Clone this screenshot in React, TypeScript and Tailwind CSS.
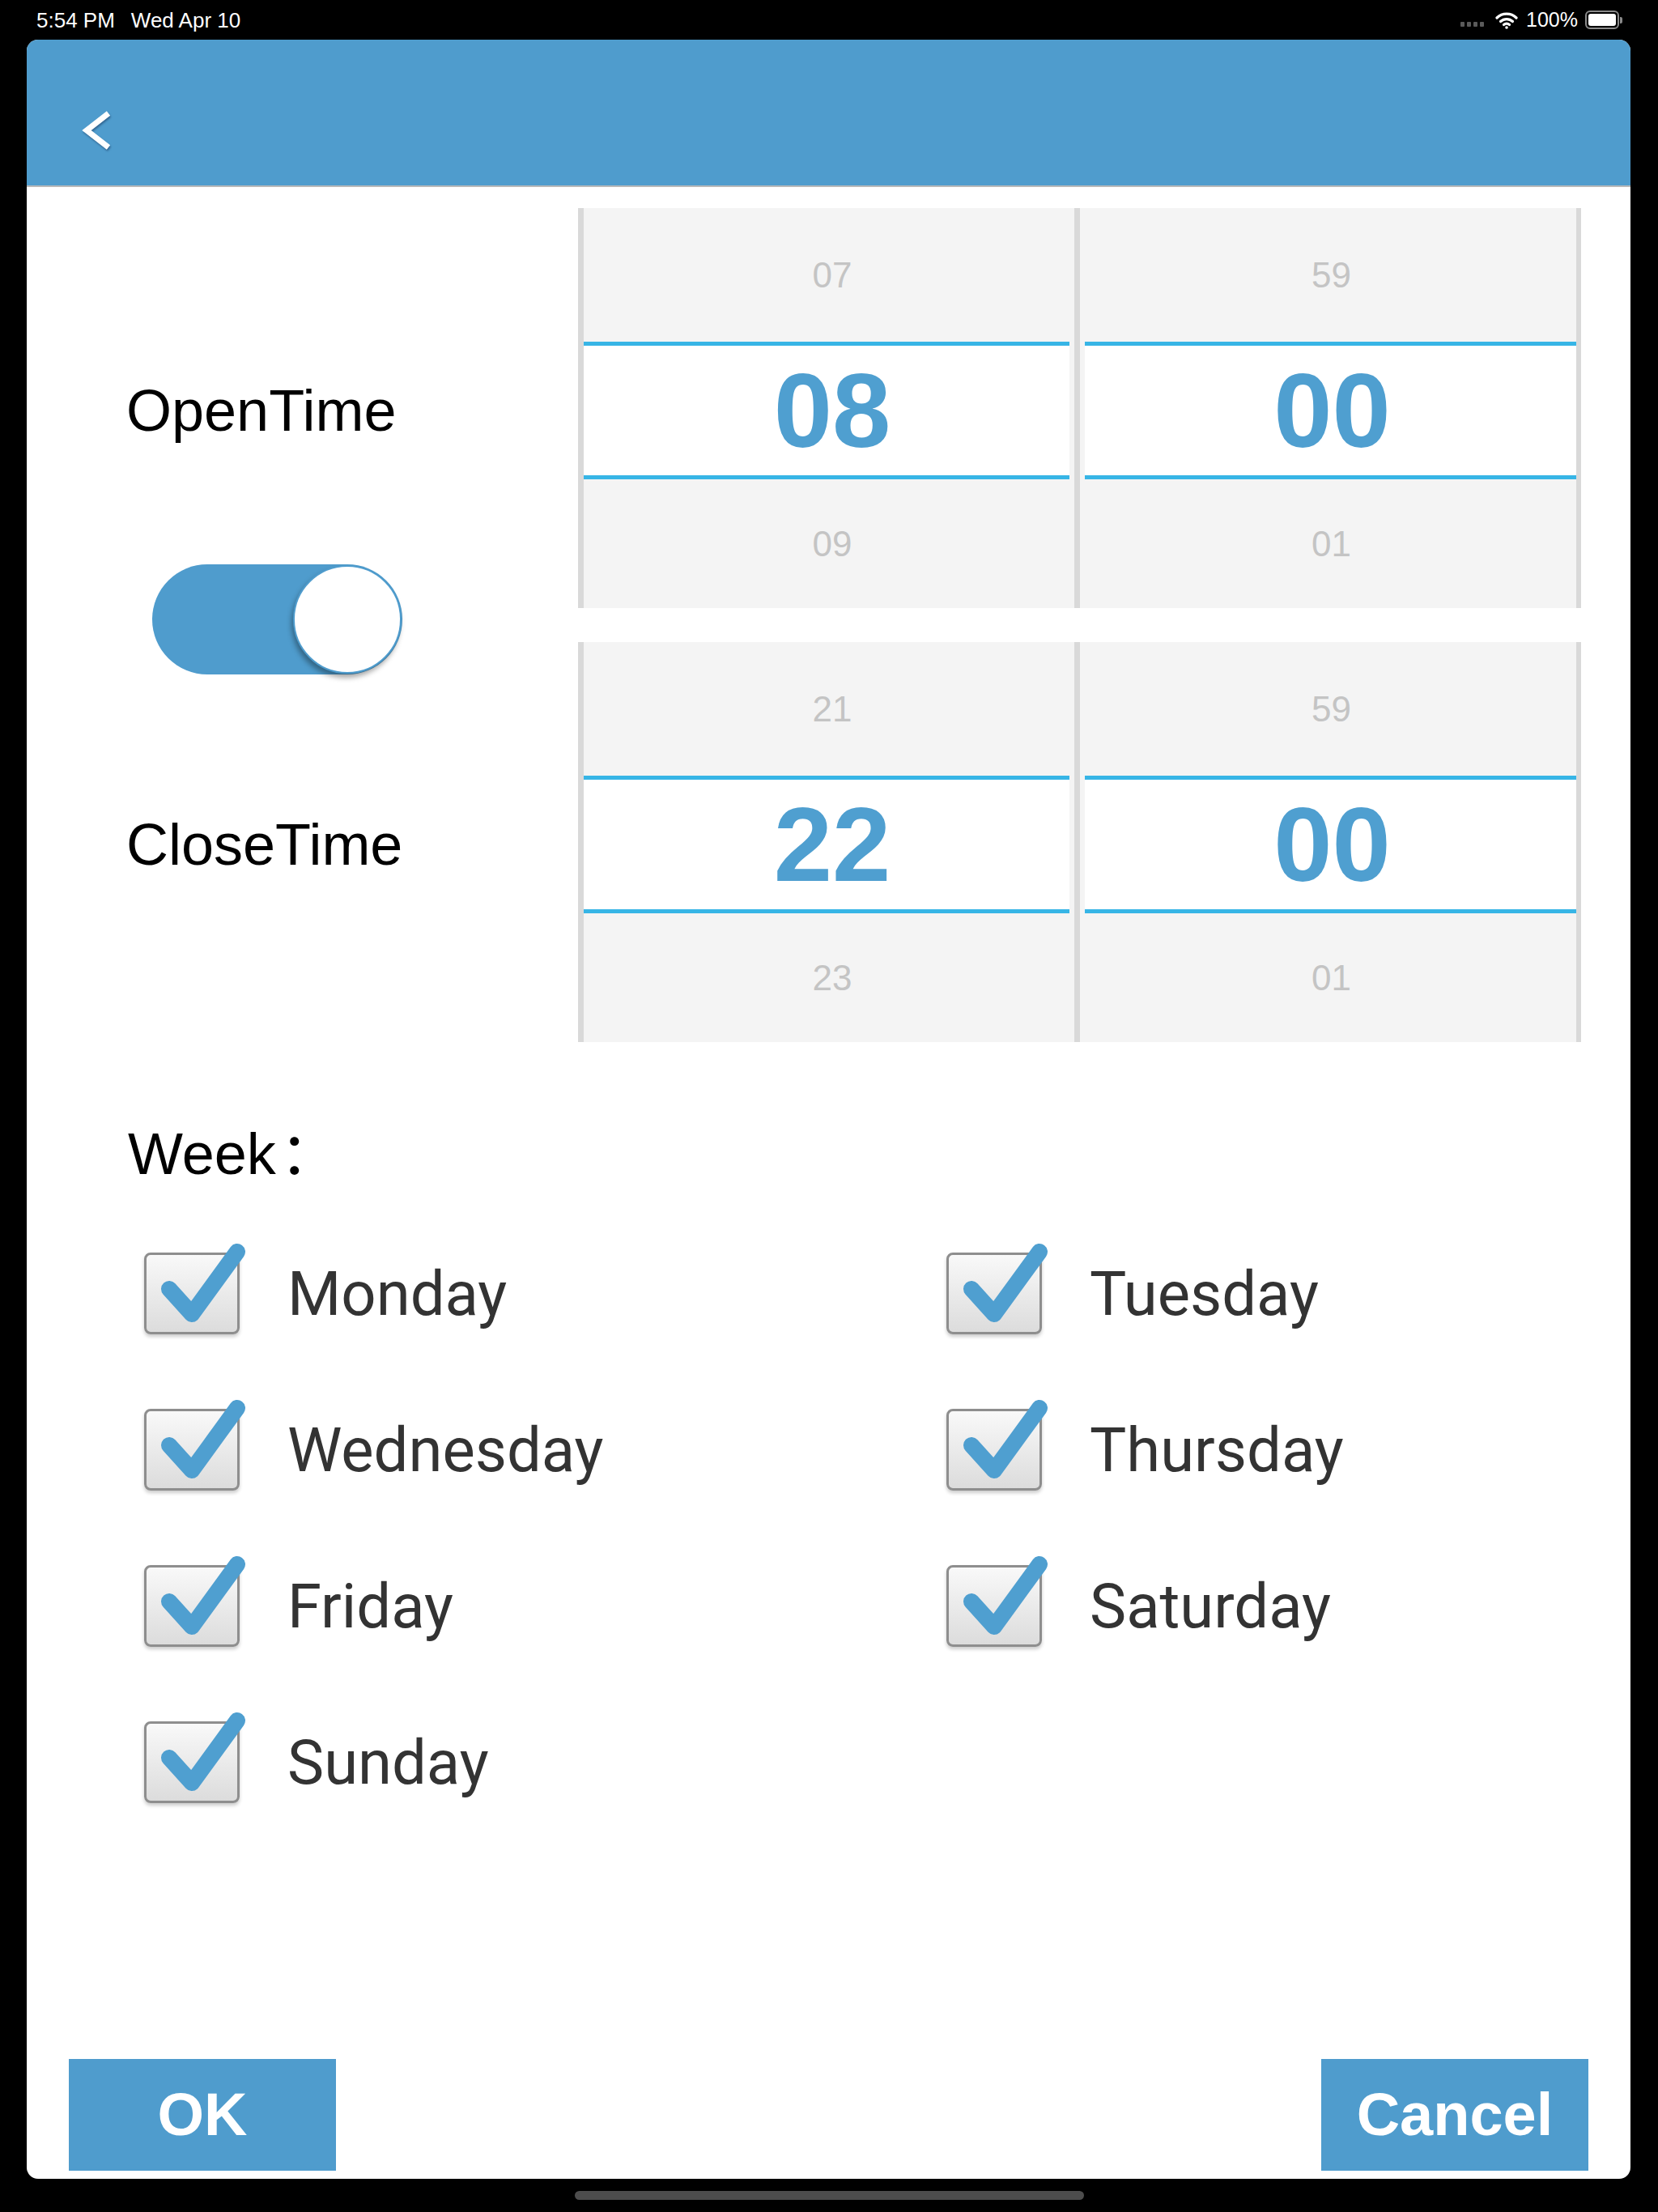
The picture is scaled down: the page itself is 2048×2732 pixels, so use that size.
import React from "react";

function Chevron() {
  return (
    <svg width="48" height="56" viewBox="0 0 48 56" className="drop-shadow-[1px_2px_1px_rgba(20,50,90,0.5)]">
      <path d="M41 7 L14 28 L41 49" fill="none" stroke="#ffffff" strokeWidth="7" strokeLinecap="butt" strokeLinejoin="miter" />
    </svg>
  );
}

function Wifi() {
  return (
    <svg width="28" height="22" viewBox="0 0 28 22">
      <path d="M2 8 A17 17 0 0 1 26 8" fill="none" stroke="#fff" strokeWidth="3.2" strokeLinecap="round" />
      <path d="M6.5 12.5 A11 11 0 0 1 21.5 12.5" fill="none" stroke="#fff" strokeWidth="3.2" strokeLinecap="round" />
      <path d="M10.5 16.5 A5.5 5.5 0 0 1 17.5 16.5" fill="none" stroke="#fff" strokeWidth="3.2" strokeLinecap="round" />
      <circle cx="14" cy="20" r="1.8" fill="#fff" />
    </svg>
  );
}

function Check() {
  return (
    <svg width="140" height="130" viewBox="0 -16 140 130" className="absolute left-0 top-[-16px] overflow-visible">
      <path d="M31 45 L59 76 L115 -1" fill="none" stroke="#4f9fd0" strokeWidth="20" strokeLinecap="round" strokeLinejoin="round" />
    </svg>
  );
}

function Day({ name }: { name: string }) {
  return (
    <div className="flex h-[193px] items-center">
      <div className="relative h-[101px] w-[118px] shrink-0">
        <div className="h-full w-full rounded-[8px] border-[3px] border-[#8e8e8e] bg-linear-to-b from-[#f9f9f9] to-[#dcdcdc] shadow-[0_3px_4px_rgba(0,0,0,0.2)]" />
        <Check />
      </div>
      <span className="ml-[59px] text-[76px] leading-none text-[#333333] [font-family:Roboto,'Liberation_Sans',sans-serif]">
        {name}
      </span>
    </div>
  );
}

function PickerColumn({
  top,
  mid,
  bottom,
  second,
}: {
  top: string;
  mid: string;
  bottom: string;
  second?: boolean;
}) {
  return (
    <div
      className={
        second
          ? "flex h-[494px] w-[626px] flex-col border-l-[7px] border-r-[6px] border-[#d9d9d9] bg-[#f4f4f4]"
          : "flex h-[494px] w-[613px] flex-col border-l-[7px] border-[#d9d9d9] bg-[#f4f4f4]"
      }
    >
      <div className="flex h-[165px] items-center justify-center pl-[8px] text-[44px] leading-none text-[#c4c4c4]">
        {top}
      </div>
      <div
        className={
          second
            ? "ml-[6px] flex h-[170px] items-center justify-center border-y-[5px] border-[#37b5e6] bg-white pl-[4px] text-[130px] font-bold leading-none text-[#4f9fd0]"
            : "mr-[6px] flex h-[170px] items-center justify-center border-y-[5px] border-[#37b5e6] bg-white pl-[14px] text-[130px] font-bold leading-none text-[#4f9fd0]"
        }
      >
        {mid}
      </div>
      <div className="flex h-[159px] items-center justify-center pl-[8px] text-[44px] leading-none text-[#c4c4c4]">
        {bottom}
      </div>
    </div>
  );
}

export default function App() {
  return (
    <div className="flex h-[2732px] w-[2048px] flex-col bg-black [font-family:'Liberation_Sans',Arial,sans-serif]">
      {/* Status bar */}
      <div className="flex h-[49px] items-center text-[26px] leading-none text-white">
        <span className="ml-[45px]">5:54 PM</span>
        <span className="ml-[20px]">Wed Apr 10</span>
        <div className="ml-auto mr-[44px] flex items-center">
          <div className="mr-[14px] mt-[10px] flex gap-[3px]">
            <div className="h-[6px] w-[5px] rounded-[1px] bg-[#5a5a5a]" />
            <div className="h-[6px] w-[5px] rounded-[1px] bg-[#5a5a5a]" />
            <div className="h-[6px] w-[5px] rounded-[1px] bg-[#5a5a5a]" />
            <div className="h-[6px] w-[5px] rounded-[1px] bg-[#5a5a5a]" />
          </div>
          <Wifi />
          <span className="ml-[10px] text-[25px]">100%</span>
          <div className="ml-[9px] flex items-center">
            <div className="flex h-[23px] w-[42px] rounded-[6px] border-2 border-[#8a8a8a] p-[2px]">
              <div className="h-full w-full rounded-[3px] bg-white" />
            </div>
            <div className="ml-[1px] h-[8px] w-[3px] rounded-r-[2px] bg-[#8a8a8a]" />
          </div>
        </div>
      </div>

      {/* Card */}
      <div className="ml-[33px] flex h-[2642px] w-[1981px] flex-col overflow-hidden rounded-[14px] bg-white">
        {/* Header */}
        <div className="h-[182px] shrink-0 border-b-[2px] border-[#b9b9b9] bg-[#4f9ccd] pl-[60px] pt-[84px]">
          <Chevron />
        </div>

        {/* Time section */}
        <div className="flex pt-[26px]">
          <div className="flex w-[681px] shrink-0 flex-col">
            <div className="ml-[123px] mt-[210px] h-[80px] text-[72px] leading-[80px] text-black">OpenTime</div>
            <div className="ml-[155px] mt-[150px] flex h-[136px] w-[309px] items-center justify-end rounded-full bg-[#4f9ccd] p-[1px]">
              <div className="h-[134px] w-[134px] rounded-full border-[2px] border-[#4f9ccd] bg-white shadow-[-2px_5px_6px_rgba(0,0,0,0.35)]" />
            </div>
            <div className="ml-[123px] mt-[170px] h-[80px] text-[72px] leading-[80px] text-black">CloseTime</div>
          </div>
          <div className="flex flex-col gap-[42px]">
            <div className="flex">
              <PickerColumn top="07" mid="08" bottom="09" />
              <PickerColumn top="59" mid="00" bottom="01" second />
            </div>
            <div className="flex">
              <PickerColumn top="21" mid="22" bottom="23" />
              <PickerColumn top="59" mid="00" bottom="01" second />
            </div>
          </div>
        </div>

        {/* Week */}
        <div className="ml-[125px] mt-[92px] h-[80px] text-[72px] leading-[80px] text-black">
          Week<span className="ml-[5px] [font-family:'Noto_Sans_CJK_SC',sans-serif]">：</span>
        </div>
        <div className="mt-[42px] grid grid-cols-[991px_1fr] pl-[145px]">
          <Day name="Monday" />
          <Day name="Tuesday" />
          <Day name="Wednesday" />
          <Day name="Thursday" />
          <Day name="Friday" />
          <Day name="Saturday" />
          <Day name="Sunday" />
        </div>

        {/* Buttons */}
        <div className="mt-auto flex justify-between px-[52px] pb-[10px]">
          <button className="flex h-[138px] w-[330px] items-center justify-center bg-[#4f9ccd] text-[74px] font-bold leading-none text-white">
            OK
          </button>
          <button className="flex h-[138px] w-[330px] items-center justify-center bg-[#4f9ccd] text-[74px] font-bold leading-none text-white">
            Cancel
          </button>
        </div>
      </div>

      {/* Home indicator */}
      <div className="mx-auto mt-[15px] h-[11px] w-[629px] rounded-full bg-[#4d4d4d]" />
    </div>
  );
}
